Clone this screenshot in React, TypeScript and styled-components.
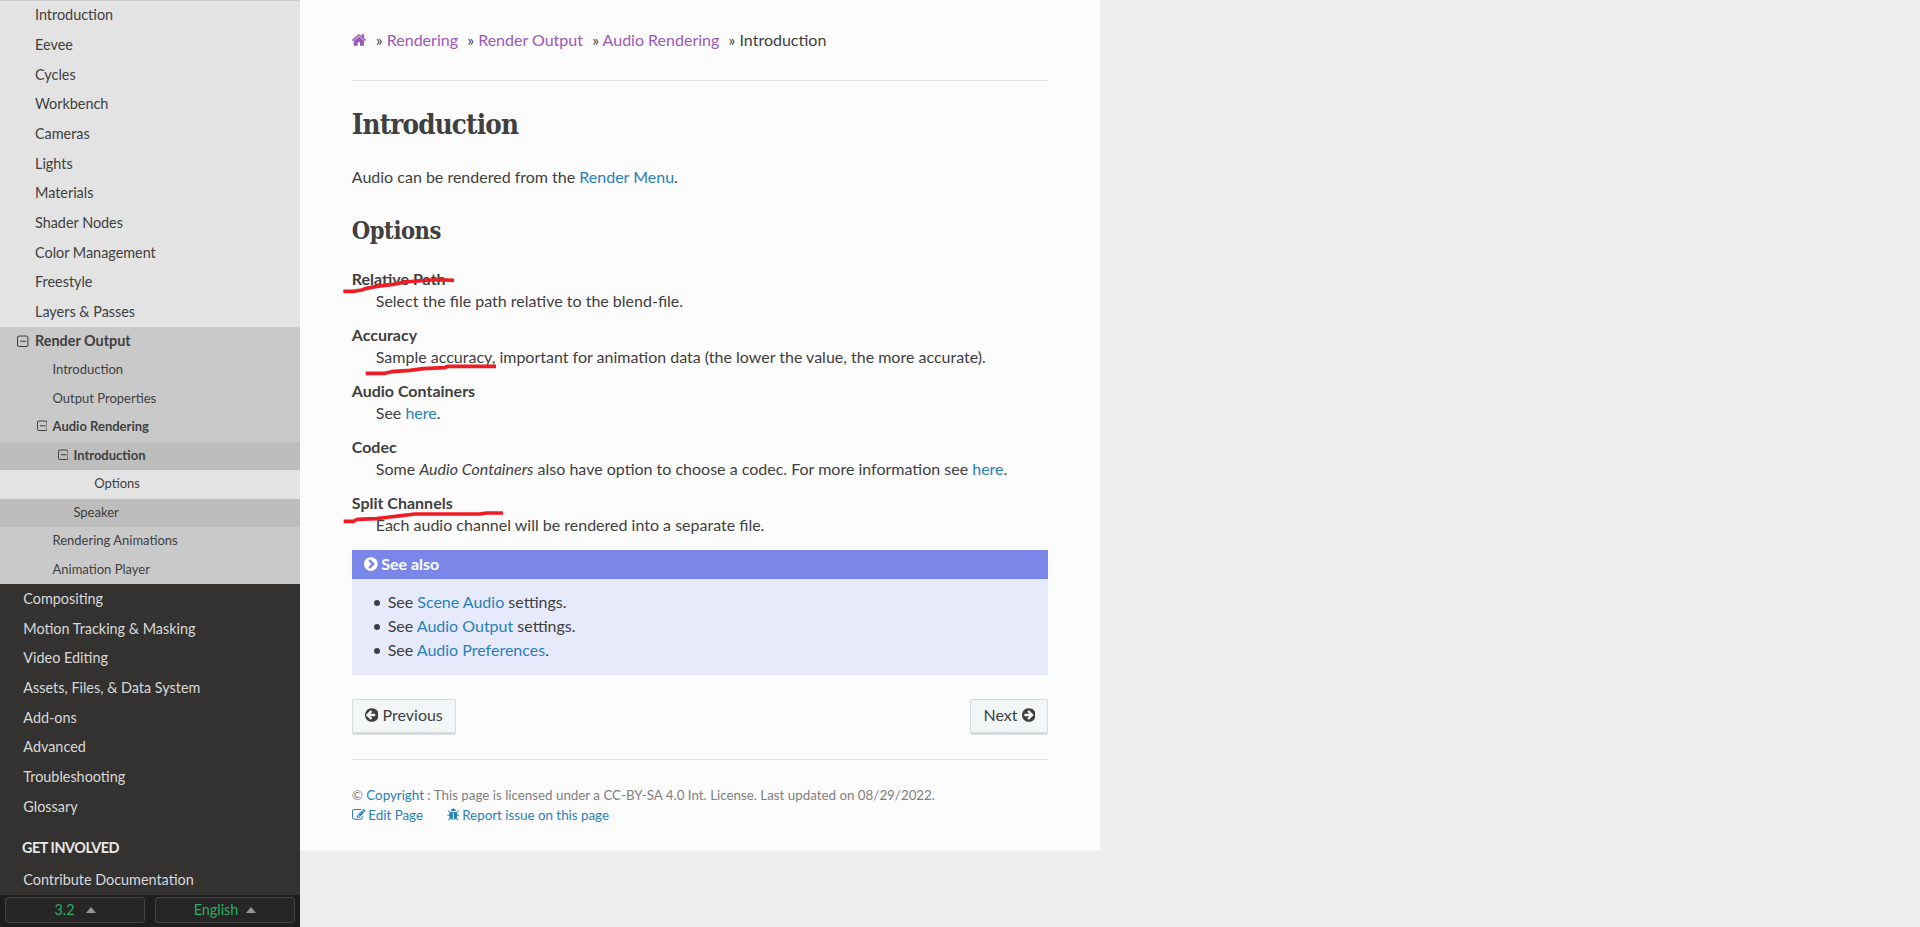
import React from "react";
import styled, { createGlobalStyle, css } from "styled-components";

const GlobalStyle = createGlobalStyle`
  *, *::before, *::after { box-sizing: border-box; }
  html, body { margin: 0; height: 100%; overflow: hidden; }
  body {
    background: #eeeeee;
    color: #404040;
    font-family: Lato, "Liberation Sans", sans-serif;
    font-size: 16px;
    line-height: 24px;
  }
`;

const DISC =
  "q0 209-103 385.5t-279.5 279.5-385.5 103-385.5-103-279.5-279.5-103-385.5 103-385.5 279.5-279.5 385.5-103 385.5 103 279.5 279.5 103 385.5z";

const ICONS = {
  home: "M1408 992v480q0 26-19 45t-45 19h-384v-384h-256v384h-384q-26 0-45-19t-19-45v-480q0-1 .5-3t.5-3l575-474 575 474q1 2 1 6zm223-69l-62 74q-8 9-21 11h-3q-13 0-21-7l-692-577-692 577q-12 8-24 7-13-2-21-11l-62-74q-8-10-7-23.5t11-21.5l719-599q32-26 76-26t76 26l244 204v-195q0-14 9-23t23-9h192q14 0 23 9t9 23v408l219 182q10 8 11 21.5t-7 23.5z",
  left:
    "M1280 960v-128q0-26-19-45t-45-19h-502l189-189q19-19 19-45t-19-45l-91-91q-18-18-45-18t-45 18l-362 362-91 91q-18 18-18 45t18 45l91 91 362 362q18 18 45 18t45-18l91-91q18-18 18-45t-18-45l-189-189h502q26 0 45-19t19-45zm384-64" + DISC,
  right:
    "M1413 896q0-27-18-45l-91-91-362-362q-18-18-45-18t-45 18l-91 91q-18 18-18 45t18 45l189 189h-502q-26 0-45 19t-19 45v128q0 26 19 45t45 19h502l-189 189q-19 19-19 45t19 45l91 91q18 18 45 18t45-18l362-362 91-91q18-18 18-45zm251 0" + DISC,
  chevron:
    "M845 1395l454-454q19-19 19-45t-19-45l-454-454q-19-19-45-19t-45 19l-102 102q-19 19-19 45t19 45l307 307-307 307q-19 19-19 45t19 45l102 102q19 19 45 19t45-19zm819-499" + DISC,
  edit: "M888 1184l116-116-152-152-116 116v56h96v96h56zm440-720q-16-16-33 1l-350 350q-17 17-1 33t33-1l350-350q17-17 1-33zm80 594v190q0 119-84.5 203.5t-203.5 84.5h-832q-119 0-203.5-84.5t-84.5-203.5v-832q0-119 84.5-203.5t203.5-84.5h832q63 0 117 25 15 7 18 23 3 17-9 29l-49 49q-14 14-32 8-23-6-45-6h-832q-66 0-113 47t-47 113v832q0 66 47 113t113 47h832q66 0 113-47t47-113v-126q0-13 9-22l64-64q15-15 35-7t20 29zm-96-738l288 288-672 672h-288v-288zm444 132l-92 92-288-288 92-92q28-28 68-28t68 28l152 152q28 28 28 68t-28 68z",
  bug: "M1696 960q0 26-19 45t-45 19h-224q0 171-67 290l208 209q19 19 19 45t-19 45q-18 19-45 19t-45-19l-198-197q-5 5-15 13t-42 28.5-65 36.5-82 29-97 13v-896h-128v896q-51 0-101.5-13.5t-87-33-66-39-43.5-32.5l-15-14-183 207q-20 21-48 21-24 0-43-16-19-18-20.5-44.5t15.5-46.5l202-227q-58-114-58-274h-224q-26 0-45-19t-19-45 19-45 45-19h224v-294l-173-173q-19-19-19-45t19-45 45-19 45 19l173 173h844l173-173q19-19 45-19t45 19 19 45-19 45l-173 173v294h224q26 0 45 19t19 45zm-480-576h-640q0-133 93.5-226.5t226.5-93.5 226.5 93.5 93.5 226.5z",
  minus:
    "M1280 864v64q0 14-9 23t-23 9h-704q-14 0-23-9t-9-23v-64q0-14 9-23t23-9h704q14 0 23 9t9 23zm128 448v-832q0-66-47-113t-113-47h-832q-66 0-113 47t-47 113v832q0 66 47 113t113 47h832q66 0 113-47t47-113zm128-832v832q0 119-84.5 203.5t-203.5 84.5h-832q-119 0-203.5-84.5t-84.5-203.5v-832q0-119 84.5-203.5t203.5-84.5h832q119 0 203.5 84.5t84.5 203.5z",
};

type IconName = keyof typeof ICONS;

/* Each glyph keeps its own horizontal extent so it sits flush with the text. */
const EXTENT: Record<IconName, [number, number]> = {
  home: [64, 1664],
  left: [128, 1536],
  right: [128, 1536],
  chevron: [128, 1536],
  edit: [0, 1792],
  bug: [64, 1664],
  minus: [128, 1408],
};

const Glyph = styled.svg`
  flex: none;
  display: block;
  fill: currentColor;
`;

const Icon = ({ name, size }: { name: IconName; size: number }) => {
  const [x, w] = EXTENT[name];
  return (
    <Glyph viewBox={`${x} 0 ${w} 1792`} width={(size * w) / 1792} height={size} aria-hidden>
      <path d={ICONS[name]} />
    </Glyph>
  );
};

const Page = styled.div`
  display: flex;
  align-items: flex-start;
  height: 927px;
  overflow: hidden;
`;

const Sidebar = styled.nav`
  width: 300px;
  height: 927px;
  flex: none;
  display: flex;
  flex-direction: column;
  background: #333230;
`;

const Menu = styled.div`
  flex: 1;
  min-height: 0;
  overflow: hidden;
  border-top: 1px solid #c9c9c9;
`;

const MenuList = styled.div`
  margin-top: -0.5px;
`;

type RowProps = { $level: number; $tone?: string; $bold?: boolean };

const indents: Record<number, number> = { 1: 23.3, 2: 35, 3: 52.5, 4: 73.4, 5: 94.2 };

const Row = styled.a<RowProps>`
  display: flex;
  align-items: center;
  height: ${(p) => (p.$level > 2 ? 28.5 : 29.65)}px;
  padding-left: ${(p) => indents[p.$level]}px;
  padding-top: ${(p) => (p.$level > 2 ? 0 : 0.2)}px;
  padding-bottom: ${(p) => (p.$level > 2 ? 2.5 : 0)}px;
  font-size: ${(p) => (p.$level > 2 ? 13 : 14.4)}px;
  line-height: 18px;
  font-weight: ${(p) => (p.$bold ? 700 : 400)};
  color: ${(p) => (p.$level === 1 ? "#d9d9d9" : "#404040")};
  background: ${(p) => p.$tone ?? "transparent"};
`;

const Toggle = styled.span<{ $width: number }>`
  display: flex;
  margin-left: ${(p) => -p.$width}px;
  width: ${(p) => p.$width}px;
`;

const Caption = styled.div`
  margin: 11px 0 1px;
  height: 32px;
  padding-left: 22px;
  line-height: 32px;
  font-size: 14.4px;
  font-weight: 700;
  letter-spacing: -0.45px;
  color: #e8e8e8;
  text-transform: uppercase;
`;

const Versions = styled.div`
  flex: none;
  display: flex;
  gap: 10px;
  height: 32px;
  padding: 2px 5px 4px;
  background: #1f1d1d;
`;

const Selector = styled.div<{ $gap: number }>`
  flex: 1;
  display: flex;
  align-items: center;
  justify-content: center;
  gap: ${(p) => p.$gap}px;
  border: 1px solid #444;
  border-radius: 3px;
  background: #272525;
  color: #27ae60;
  font-size: 14.4px;
  line-height: 18px;
`;

const Caret = styled.i`
  border: 5px solid transparent;
  border-top: 0;
  border-bottom: 6px solid #939393;
`;

const Content = styled.main`
  position: relative;
  width: 800px;
  height: 851px;
  padding: 0 51.78px;
  background: #fcfcfc;
`;

const Link = styled.a<{ $visited?: boolean }>`
  color: ${(p) => (p.$visited ? "#9b59b6" : "#2980b9")};
`;

const Crumbs = styled.div`
  display: flex;
  align-items: center;
  height: 80px;
  white-space: pre;
`;

const Crumb = styled.span`
  margin-left: 9.2px;
`;

const Rule = styled.hr`
  margin: 0;
  border: 0;
  height: 1px;
  background: #e1e4e5;
`;

const heading = css`
  margin: 0;
  font-family: "Roboto Slab", "DejaVu Serif Condensed", "DejaVu Serif", serif;
  font-stretch: condensed;
  font-weight: 700;
  white-space: nowrap;
`;

const Title = styled.h1`
  ${heading}
  padding-top: 24px;
  height: 84px;
  font-size: 27.5px;
  line-height: 38px;
  letter-spacing: -0.82px;
`;

const Subtitle = styled.h2`
  ${heading}
  padding-top: 2px;
  height: 56px;
  font-size: 23.5px;
  line-height: 32px;
  letter-spacing: -0.45px;
`;

const Paragraph = styled.p`
  margin: 0 0 24px;
`;

const Definitions = styled.dl`
  margin: 0 0 13px;
`;

const Term = styled.dt`
  font-weight: 700;
  line-height: 20px;
`;

const Detail = styled.dd`
  margin: 0 0 12px 24px;

  &:last-child {
    margin-bottom: 0;
  }
`;

const Note = styled.aside`
  height: 125px;
  background: #e7eafa;
`;

const NoteTitle = styled.div`
  display: flex;
  align-items: center;
  gap: 3.6px;
  height: 29px;
  padding: 0 0 1px 12.1px;
  color: #fff;
  background: #7a86e8;
  font-weight: 700;
`;

const NoteList = styled.ul`
  margin: 0;
  padding: 11px 0 0 22px;
  list-style: none;
`;

const NoteItem = styled.li`
  display: flex;
  align-items: center;

  &::before {
    content: "";
    width: 6px;
    height: 6px;
    margin: 1px 7.9px 0 0;
    border-radius: 50%;
    background: #404040;
  }
`;

const Pager = styled.div`
  display: flex;
  justify-content: space-between;
  padding: 24px 0;
`;

const Button = styled.button`
  display: flex;
  align-items: center;
  gap: 4.1px;
  height: 36px;
  padding: 0 12px 4px;
  border: 1px solid #d9dcdd;
  border-radius: 2px;
  background: #f3f6f6;
  box-shadow: inset 0 -2px 0 #d9dcdd;
  color: #404040;
  font: inherit;
`;

const Footer = styled.footer`
  padding-top: 25px;
  color: #808080;
  font-size: 13.35px;
  line-height: 20px;
`;

const FooterLinks = styled.div`
  display: flex;
  gap: 23.6px;
  color: #2980b9;
`;

const FooterLink = styled.a`
  display: flex;
  align-items: center;
  gap: 3px;
`;

const Marks = styled.svg`
  position: absolute;
  left: 30px;
  top: 250px;
  fill: none;
  stroke: #ee1c24;
`;

const topRows = ["Introduction", "Eevee", "Cycles", "Workbench", "Cameras", "Lights", "Materials", "Shader Nodes", "Color Management", "Freestyle", "Layers & Passes"];

const nested: { text: string; level: number; tone: string; open?: boolean }[] = [
  { text: "Render Output", level: 2, tone: "#c9c9c9", open: true },
  { text: "Introduction", level: 3, tone: "#c9c9c9" },
  { text: "Output Properties", level: 3, tone: "#c9c9c9" },
  { text: "Audio Rendering", level: 3, tone: "#c9c9c9", open: true },
  { text: "Introduction", level: 4, tone: "#bdbdbd", open: true },
  { text: "Options", level: 5, tone: "#e3e3e3" },
  { text: "Speaker", level: 4, tone: "#bdbdbd" },
  { text: "Rendering Animations", level: 3, tone: "#c9c9c9" },
  { text: "Animation Player", level: 3, tone: "#c9c9c9" },
];

const sections = ["Compositing", "Motion Tracking & Masking", "Video Editing", "Assets, Files, & Data System", "Add-ons", "Advanced", "Troubleshooting", "Glossary"];

export default function App() {
  return (
    <Page>
      <GlobalStyle />
      <Sidebar>
        <Menu>
          <MenuList>
            {topRows.map((t) => (
              <Row key={t} $level={2} $tone="#e3e3e3">{t}</Row>
            ))}
            {nested.map((r, i) => (
              <Row key={i} $level={r.level} $tone={r.tone} $bold={r.open}>
                {r.open && (
                  <Toggle $width={r.level === 2 ? 17.6 : 15.9}>
                    <Icon name="minus" size={r.level === 2 ? 14.6 : 13.4} />
                  </Toggle>
                )}
                {r.text}
              </Row>
            ))}
            {sections.map((t) => (
              <Row key={t} $level={1}>{t}</Row>
            ))}
            <Caption>Get involved</Caption>
            <Row $level={1}>Contribute Documentation</Row>
          </MenuList>
        </Menu>
        <Versions>
          <Selector $gap={11}>3.2<Caret /></Selector>
          <Selector $gap={8}>English<Caret /></Selector>
        </Versions>
      </Sidebar>
      <Content>
        <Crumbs>
          <Link $visited><Icon name="home" size={16} /></Link>
          <Crumb>» <Link $visited>Rendering</Link></Crumb>
          <Crumb>» <Link $visited>Render Output</Link></Crumb>
          <Crumb>» <Link $visited>Audio Rendering</Link></Crumb>
          <Crumb>» Introduction</Crumb>
        </Crumbs>
        <Rule />
        <Title>Introduction</Title>
        <Paragraph>Audio can be rendered from the <Link>Render Menu</Link>.</Paragraph>
        <Subtitle>Options</Subtitle>
        <Definitions>
          <Term>Relative Path</Term>
          <Detail>Select the file path relative to the blend-file.</Detail>
          <Term>Accuracy</Term>
          <Detail>Sample accuracy, important for animation data (the lower the value, the more accurate).</Detail>
          <Term>Audio Containers</Term>
          <Detail>See <Link>here</Link>.</Detail>
          <Term>Codec</Term>
          <Detail>Some <em>Audio Containers</em> also have option to choose a codec. For more information see <Link>here</Link>.</Detail>
          <Term>Split Channels</Term>
          <Detail>Each audio channel will be rendered into a separate file.</Detail>
        </Definitions>
        <Note>
          <NoteTitle><Icon name="chevron" size={16} />See also</NoteTitle>
          <NoteList>
            <NoteItem><span>See <Link>Scene Audio</Link> settings.</span></NoteItem>
            <NoteItem><span>See <Link>Audio Output</Link> settings.</span></NoteItem>
            <NoteItem><span>See <Link>Audio Preferences</Link>.</span></NoteItem>
          </NoteList>
        </Note>
        <Pager>
          <Button><Icon name="left" size={16} />Previous</Button>
          <Button>Next<Icon name="right" size={16} /></Button>
        </Pager>
        <Rule />
        <Footer>
          <div>© <Link>Copyright</Link> : This page is licensed under a CC-BY-SA 4.0 Int. License. Last updated on 08/29/2022.</div>
          <FooterLinks>
            <FooterLink><Icon name="edit" size={13.6} />Edit Page</FooterLink>
            <FooterLink><Icon name="bug" size={13.6} />Report issue on this page</FooterLink>
          </FooterLinks>
        </Footer>
        <Marks width="180" height="280" viewBox="0 0 540 840" strokeWidth="11" strokeLinejoin="round">
          <path d="M40 124H70L95 120L110 115L140 109L190 103L225 96L262 93L300 90H345L372 91" />
          <path d="M107 370H165L185 365L240 361L280 356L345 353L352 349H498" />
          <path d="M41 814H70L82 808L140 806L180 801L215 797L255 792H450L470 789H519" />
        </Marks>
      </Content>
    </Page>
  );
}
